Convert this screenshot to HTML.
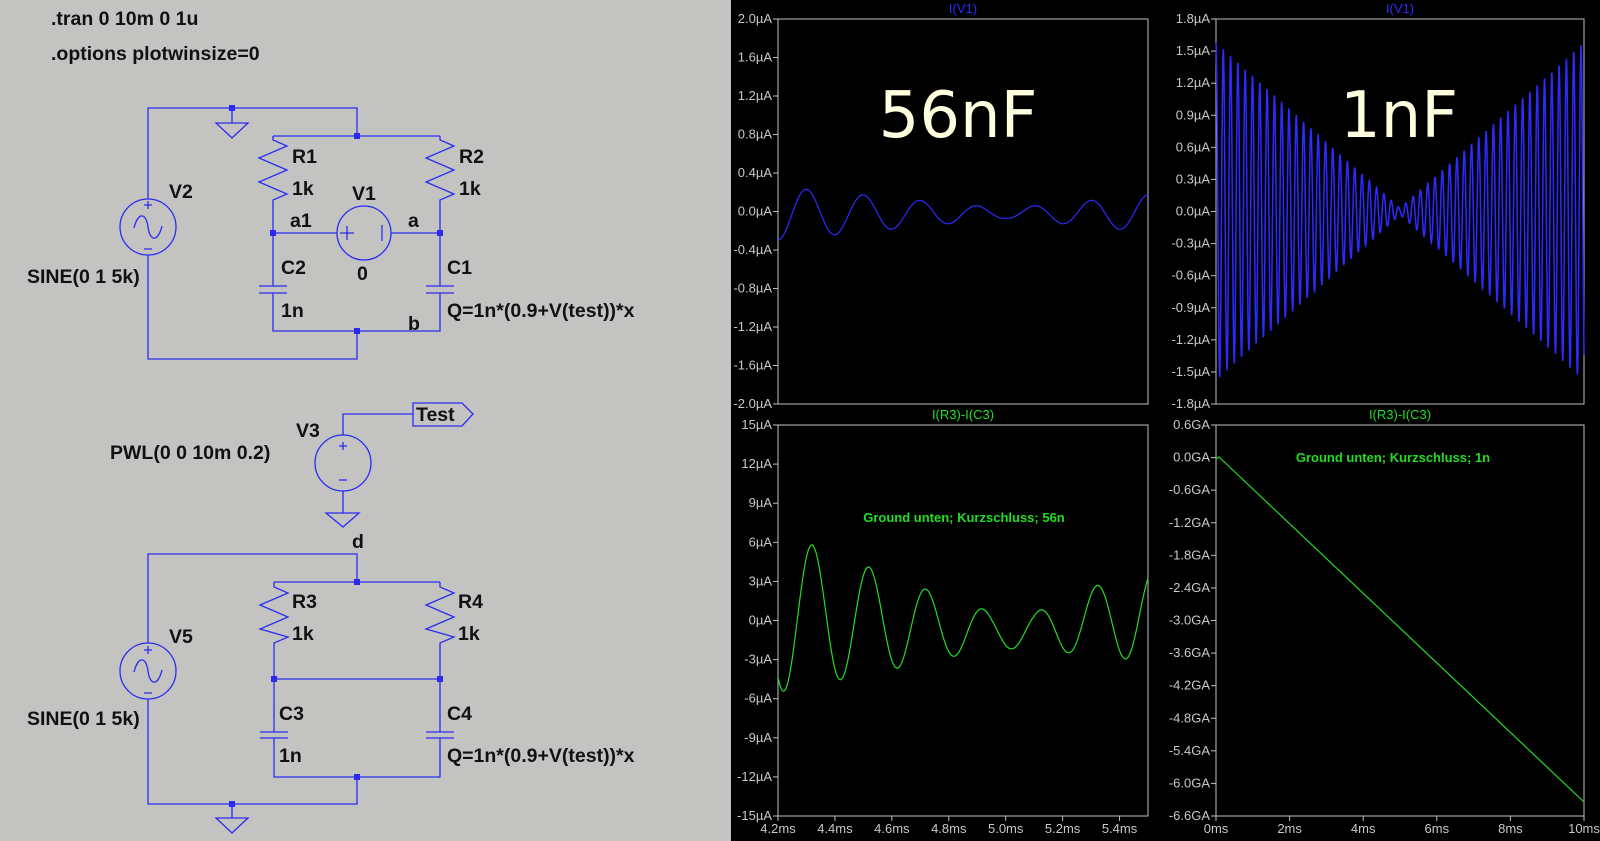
<!DOCTYPE html>
<html><head><meta charset="utf-8"><style>
html,body{margin:0;padding:0;width:1600px;height:841px;overflow:hidden;background:#c3c4c2}
svg{display:block}
.s{font-family:"Liberation Sans",sans-serif;font-weight:bold;font-size:19.5px;fill:#111}
.t{font-family:"Liberation Sans",sans-serif;font-size:13px;fill:#c8c8c8}
</style></head><body>
<svg id="sv" width="1600" height="841" viewBox="0 0 1600 841" xmlns="http://www.w3.org/2000/svg">
<rect x="0" y="0" width="731" height="841" fill="#c3c4c2"/>
<rect x="731" y="0" width="869" height="841" fill="#000"/>
<g fill="none" stroke="#2b2bf0" stroke-width="1.3">
<path d="M148,199 V108 H357 V136 M232,108 V123 M216,123 H248 L232,138 Z"/>
<path d="M148,255 V359 H357 V331"/>
<path d="M273,136 H440 M273,136 V140 L287,146 L259,158 L287,170 L259,182 L287,194 L273,200 V286 M259,286 H287 M259,293 H287 M273,293 V331 H440 V293 M426,286 H454 M426,293 H454 M440,286 V200 L454,194 L426,182 L454,170 L426,158 L454,146 L440,140 V136"/>
<path d="M273,233 H337 M391,233 H440"/>
<ellipse cx="364" cy="233" rx="27" ry="27"/>
<path d="M340,233 H354 M347,226 V240 M382,225 V241"/>
<ellipse cx="148" cy="227" rx="28" ry="28"/>
<path d="M144,205 H152 M148,201 V209 M144,249 H152 M134,228 C138,212 146,212 148,227 C150,242 158,242 162,226"/>
<path d="M343,435 V414 H413 M413,403 H462 L473,414 L462,426 H413 Z"/>
<ellipse cx="343" cy="463" rx="28" ry="28"/>
<path d="M339,446 H347 M343,442 V450 M339,480 H347 M343,491 V513 M326,513 H359 L343,527 Z"/>
<path d="M148,643 V554 H357 V582 M148,699 V804 H357 V777 M232,804 V818 M216,818 H248 L232,833 Z"/>
<ellipse cx="148" cy="671" rx="28" ry="28"/>
<path d="M144,650 H152 M148,646 V654 M144,693 H152 M134,672 C138,656 146,656 148,671 C150,686 158,686 162,670"/>
<path d="M274,582 H440 M274,582 V587 L288,593 L260,605 L288,617 L260,629 L288,637 L274,643 V732 M260,732 H288 M260,738 H288 M274,738 V777 H440 V738 M426,732 H454 M426,738 H454 M440,732 V643 L454,637 L426,629 L454,617 L426,605 L454,593 L440,587 V582 M274,679 H440"/>
</g>
<g fill="#2b2bf0">
<rect x="229" y="105" width="6" height="6"/><rect x="354" y="133" width="6" height="6"/>
<rect x="270" y="230" width="6" height="6"/><rect x="437" y="230" width="6" height="6"/>
<rect x="354" y="328" width="6" height="6"/>
<rect x="354" y="579" width="6" height="6"/><rect x="271" y="676" width="6" height="6"/>
<rect x="437" y="676" width="6" height="6"/><rect x="354" y="774" width="6" height="6"/>
<rect x="229" y="801" width="6" height="6"/>
</g>
<g class="s">
<text x="51" y="25">.tran 0 10m 0 1u</text>
<text x="51" y="60">.options plotwinsize=0</text>
<text x="169" y="198">V2</text><text x="27" y="283">SINE(0 1 5k)</text>
<text x="292" y="163">R1</text><text x="292" y="195">1k</text>
<text x="352" y="200">V1</text><text x="290" y="227">a1</text><text x="408" y="227">a</text>
<text x="459" y="163">R2</text><text x="459" y="195">1k</text>
<text x="281" y="274">C2</text><text x="357" y="280">0</text><text x="447" y="274">C1</text>
<text x="281" y="317">1n</text><text x="408" y="330">b</text><text x="447" y="317">Q=1n*(0.9+V(test))*x</text>
<text x="416" y="421">Test</text><text x="296" y="437">V3</text><text x="110" y="459">PWL(0 0 10m 0.2)</text>
<text x="352" y="548">d</text>
<text x="169" y="643">V5</text><text x="27" y="725">SINE(0 1 5k)</text>
<text x="292" y="608">R3</text><text x="292" y="640">1k</text>
<text x="458" y="608">R4</text><text x="458" y="640">1k</text>
<text x="279" y="720">C3</text><text x="279" y="762">1n</text>
<text x="447" y="720">C4</text><text x="447" y="762">Q=1n*(0.9+V(test))*x</text>
</g>
<g id="plots"></g>
</svg>
<script>
(function(){
var g=document.getElementById('plots'),h='';
function plot(x0,x1,y0,y1,labs,title,tc,xl){
 h+='<rect x="'+x0+'" y="'+y0+'" width="'+(x1-x0)+'" height="'+(y1-y0)+'" fill="none" stroke="#c0c0c0" stroke-width="1"/>';
 var n=labs.length;
 for(var i=0;i<n;i++){var y=y0+(y1-y0)*i/(n-1);
  h+='<line x1="'+(x0-5)+'" x2="'+x0+'" y1="'+y+'" y2="'+y+'" stroke="#c0c0c0"/>';
  h+='<text class="t" x="'+(x0-6)+'" y="'+(y+4)+'" text-anchor="end">'+labs[i]+'</text>';}
 h+='<text class="t" style="fill:'+tc+'" x="'+((x0+x1)/2)+'" y="'+(y0-6)+'" text-anchor="middle">'+title+'</text>';
 if(xl){for(var j=0;j<xl.length;j++){var x=x0+xl[j][0]*(x1-x0);
  h+='<line x1="'+x+'" x2="'+x+'" y1="'+y1+'" y2="'+(y1+5)+'" stroke="#c0c0c0"/>';
  h+='<text class="t" x="'+x+'" y="'+(y1+17)+'" text-anchor="middle">'+xl[j][1]+'</text>';}}
}
function L(a,b,s){var r=[];for(var v=a;v>=b-1e-9;v-=s)r.push(v);return r;}
var mu='\u00b5A';
plot(778,1148,19,404,L(2,-2,0.4).map(function(v){return (Math.abs(v)<1e-9?0:v).toFixed(1)+mu}),'I(V1)','#2b2bff');
plot(1216,1584,19,404,L(1.8,-1.8,0.3).map(function(v){return (Math.abs(v)<1e-9?0:v).toFixed(1)+mu}),'I(V1)','#2b2bff');
var xl3=[];for(var k=0;k<7;k++)xl3.push([k*0.2/1.3,(4.2+k*0.2).toFixed(1)+'ms']);
plot(778,1148,425,816,L(15,-15,3).map(function(v){return Math.round(v)+mu}),'I(R3)-I(C3)','#22dd22',xl3);
var xl4=[];for(var k=0;k<6;k++)xl4.push([k/5,(k*2)+'ms']);
plot(1216,1584,425,816,L(0.6,-6.6,0.6).map(function(v){return (Math.abs(v)<1e-9?0:v).toFixed(1)+'GA'}),'I(R3)-I(C3)','#22dd22',xl4);
var p='';for(var i=0;i<=370;i++){var t=4.2+1.3*i/370;var A=0.05+0.2*Math.abs(t-5.0)/0.7;var v=-0.02+A*Math.cos(2*Math.PI*(t-4.3)/0.2);
 var y=19+385*(2-v)/4;p+=(i?'L':'M')+(778+i).toFixed(1)+','+y.toFixed(1);}
h+='<path d="'+p+'" fill="none" stroke="#2b2bff" stroke-width="1.2"/>';
p='';for(var i=0;i<=368*3;i++){var x=i/3;var t=x/368;var A=1.55*Math.abs(t-0.5)/0.5+0.03;var v=A*Math.cos(2*Math.PI*x/7.3);
 var y=19+385*(1.8-v)/3.6;p+=(i?'L':'M')+(1216+x).toFixed(2)+','+y.toFixed(1);}
h+='<path d="'+p+'" fill="none" stroke="#2b2bff" stroke-width="1.5"/>';
function lerp(pts,t){for(var i=0;i<pts.length-1;i++){if(t<=pts[i+1][0]){var f=(t-pts[i][0])/(pts[i+1][0]-pts[i][0]);return pts[i][1]+f*(pts[i+1][1]-pts[i][1]);}}return pts[pts.length-1][1];}
var Ap=[[4.2,6],[4.32,5.4],[4.72,2.8],[4.95,1.4],[5.1,1.4],[5.44,3.4],[5.6,3.6]];
var Cp=[[4.2,0.5],[4.32,0.4],[4.72,-0.4],[4.95,-0.75],[5.1,-0.8],[5.44,0.4],[5.6,0.5]];
p='';for(var i=0;i<=370;i++){var t=4.2+1.3*i/370;var v=lerp(Cp,t)+lerp(Ap,t)*Math.cos(2*Math.PI*(t-4.32)/0.2);
 var y=425+391*(15-v)/30;p+=(i?'L':'M')+(778+i).toFixed(1)+','+y.toFixed(1);}
h+='<path d="'+p+'" fill="none" stroke="#22dd22" stroke-width="1.2"/>';
h+='<path d="M1216,459 L1219,457 L1584,802" fill="none" stroke="#22dd22" stroke-width="1.2"/>';
h+='<text x="958" y="137" text-anchor="middle" style="font-family:\'DejaVu Sans\',sans-serif;font-size:64px;fill:#ffffe0">56nF</text>';
h+='<text x="1399" y="137" text-anchor="middle" style="font-family:\'DejaVu Sans\',sans-serif;font-size:64px;fill:#ffffe0">1nF</text>';
h+='<text class="t" style="fill:#22dd22;font-weight:bold" x="964" y="522" text-anchor="middle">Ground unten; Kurzschluss; 56n</text>';
h+='<text class="t" style="fill:#22dd22;font-weight:bold" x="1393" y="462" text-anchor="middle">Ground unten; Kurzschluss; 1n</text>';
g.innerHTML=h;
})();
</script>
</body></html>
